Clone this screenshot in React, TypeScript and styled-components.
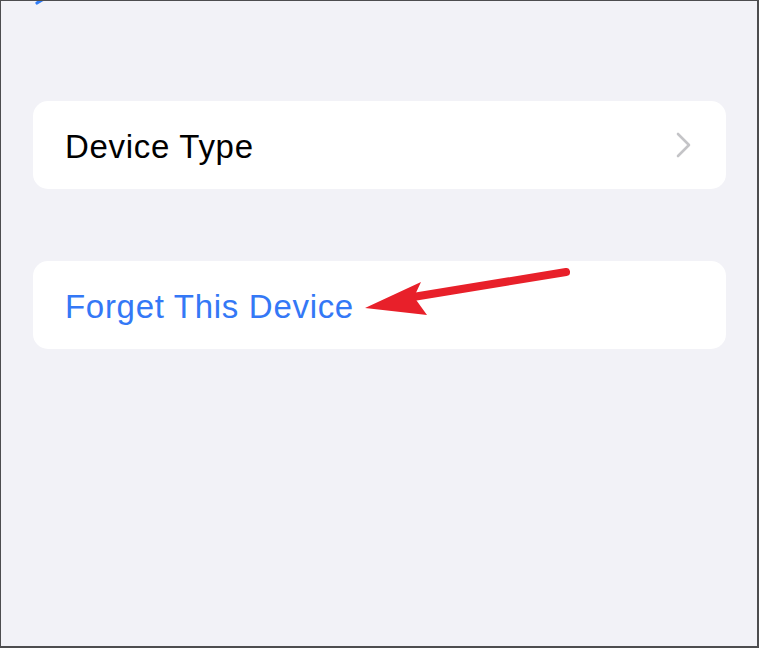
import styled, { createGlobalStyle } from 'styled-components';

const GlobalStyle = createGlobalStyle`
    html, body {
        margin: 0;
        padding: 0;
        background: #f2f2f7;
    }
    * {
        box-sizing: border-box;
    }
`

const Screen = styled.div`
    position: relative;
    width: 759px;
    height: 648px;
    background-color: #f2f2f7;
    border-style: solid;
    border-color: #4d4d4f;
    border-width: 1px 2px 2px 1px;
    padding: 100px 31px 0 32px;
    display: flex;
    flex-direction: column;
    gap: 72px;
    font-family: "Liberation Sans", Arial, sans-serif;
    overflow: hidden;
`

const BackHint = styled.svg`
    position: absolute;
    top: -1px;
    left: 32px;
`

const Card = styled.div`
    height: 88px;
    background-color: #fff;
    border-radius: 15px;
    display: flex;
    align-items: center;
    justify-content: space-between;
    padding: 0 34px 0 32px;
`

const Label = styled.span<{ $tint?: string }>`
    font-size: 33px;
    letter-spacing: 0.7px;
    color: ${p => p.$tint ?? '#000'};
    padding-top: 3px;
`

const Annotation = styled.svg`
    position: absolute;
    left: 0;
    top: 0;
    pointer-events: none;
`

function Chevron() {
    return (
        <svg width="16" height="26" viewBox="0 0 16 26">
            <path d="M2 2 L13 13 L2 24" fill="none" stroke="#c4c4c7" strokeWidth="2.6" strokeLinecap="round" strokeLinejoin="round" />
        </svg>
    );
}

export default function App() {
    return (
        <>
            <GlobalStyle />
            <Screen>
                <BackHint width="12" height="6" viewBox="0 0 12 6">
                    <path d="M9 0 L4 3" stroke="#2f7cf6" strokeWidth="3.2" strokeLinecap="round" />
                </BackHint>
                <Card>
                    <Label>Device Type</Label>
                    <Chevron />
                </Card>
                <Card>
                    <Label $tint="#3478f6">Forget This Device</Label>
                </Card>
                <Annotation width="759" height="648" viewBox="0 0 759 648">
                    <line x1="565" y1="271" x2="412" y2="296" stroke="#e8202a" strokeWidth="8" strokeLinecap="round" />
                    <path d="M364 307 L420 281 L413 296 L426 314 Z" fill="#e8202a" />
                </Annotation>
            </Screen>
        </>
    );
}
